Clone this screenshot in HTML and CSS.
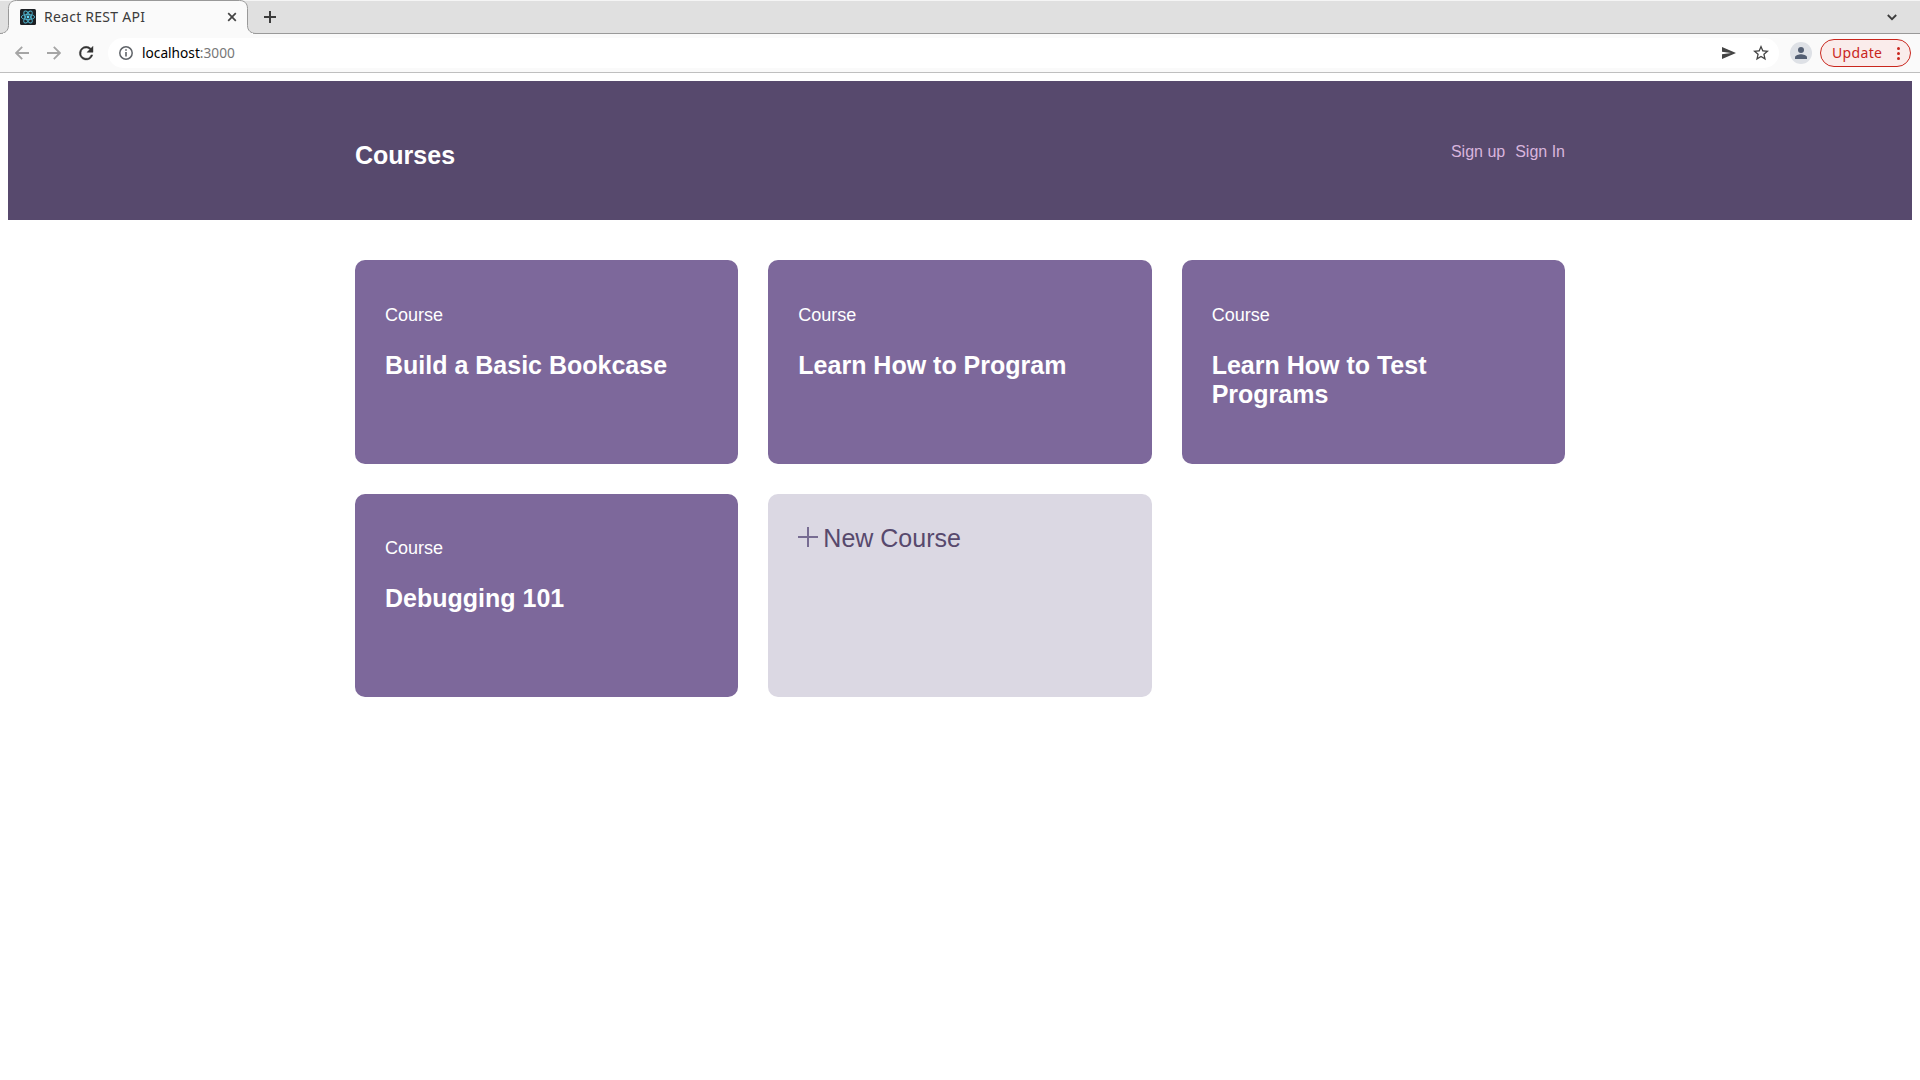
FILE: index.html
```html
<!DOCTYPE html>
<html lang="en">
<head>
<meta charset="utf-8">
<title>React REST API</title>
<link rel="stylesheet" href="styles.css">
</head>
<body>
<div class="tabstrip">
  <div class="tab">
    <svg class="tab-shape" width="256" height="34" viewBox="0 0 256 34"><path d="M0 33.5C5 33.5 8.500 30.500 8.500 25.500V8.500C8.500 3.500 11.500.5 16.500.5H239.500C244.500.5 247.500 3.500 247.500 8.500V25.500C247.500 30.500 251 33.500 256 33.500V34H0Z" fill="#fafafa" stroke="#999"/><path d="M3 33.500H253" stroke="#fafafa" stroke-width="1"/></svg>
    <svg class="favicon" width="16" height="16" viewBox="0 0 16 16"><rect width="16" height="16" rx="1.500" fill="#1d2024"/><g fill="none" stroke="#4fb3cd" stroke-width=".9"><ellipse cx="8" cy="8" rx="6.700" ry="2.600"/><ellipse cx="8" cy="8" rx="6.700" ry="2.600" transform="rotate(60 8 8)"/><ellipse cx="8" cy="8" rx="6.700" ry="2.600" transform="rotate(120 8 8)"/></g><circle cx="8" cy="8" r="1.400" fill="#61dafb"/></svg>
    <span class="tab-title">React REST API</span>
    <svg class="tab-close" width="10" height="10" viewBox="0 0 10 10"><path d="M1.200 1.200L8.800 8.800M8.800 1.200L1.200 8.800" stroke="#444" stroke-width="1.700"/></svg>
  </div>
  <svg class="new-tab" width="12" height="12" viewBox="0 0 12 12"><path d="M6 0V12M0 6H12" stroke="#3c3c3c" stroke-width="2"/></svg>
  <svg class="tab-search" width="10" height="7" viewBox="0 0 10 7"><path d="M.8 1L5 5.200L9.200 1" fill="none" stroke="#3c3c3c" stroke-width="1.800"/></svg>
</div>
<div class="toolbar">
  <svg class="nav back" width="14" height="14" viewBox="0 0 14 14"><path d="M14 7H1.500M7.200.9L1.100 7L7.200 13.100" fill="none" stroke="#a5a5a5" stroke-width="1.800"/></svg>
  <svg class="nav forward" width="14" height="14" viewBox="0 0 14 14"><path d="M0 7H12.500M6.800.9L12.900 7L6.800 13.100" fill="none" stroke="#a5a5a5" stroke-width="1.800"/></svg>
  <svg class="nav" width="24" height="24" viewBox="1 1 22 22"><path d="M17.650 6.350A7.960 7.960 0 0 0 12 4a8 8 0 1 0 7.730 10h-2.080A6 6 0 1 1 12 6c1.660 0 3.140.69 4.220 1.780L13 11h7V4z" fill="#333" transform="translate(2.800 2.800) scale(.78)" stroke="#333" stroke-width=".5"/></svg>
  <div class="omnibox">
    <svg width="14" height="14" viewBox="0 0 14 14"><circle cx="7" cy="7" r="6.200" fill="none" stroke="#5f6368" stroke-width="1.500"/><path d="M7 6V10.500M7 3.300V4.800" stroke="#5f6368" stroke-width="1.600"/></svg>
    <span class="url">localhost<span class="port">:3000</span></span>
    <svg class="send" width="14" height="12" viewBox="0 0 14 12"><path d="M0 0L14 6L0 12V7.300L9 6L0 4.700Z" fill="#444"/></svg>
    <svg class="star" width="20" height="20" viewBox="2 2 20 20"><path transform="translate(2.400 2.400) scale(.8)" d="M22 9.240l-7.190-.62L12 2 9.190 8.630 2 9.240l5.460 4.730L5.820 21 12 17.270 18.180 21l-1.630-7.030zM12 15.400l-3.760 2.270 1-4.280-3.320-2.880 4.380-.38L12 6.100l1.710 4.040 4.380.38-3.320 2.880 1 4.280z" fill="#444"/></svg>
  </div>
  <svg class="avatar" width="22" height="22" viewBox="0 0 22 22"><circle cx="11" cy="11" r="11" fill="#dee1e6"/><circle cx="11" cy="8" r="3" fill="#535e72"/><path d="M5 17V15.300C5 13.300 9 12.300 11 12.300S17 13.300 17 15.300V17Z" fill="#535e72"/></svg>
  <div class="update"><span class="update-text">Update</span><svg width="3" height="13" viewBox="0 0 3 13" fill="#c9261d"><circle cx="1.500" cy="1.500" r="1.500"/><circle cx="1.500" cy="6.500" r="1.500"/><circle cx="1.500" cy="11.500" r="1.500"/></svg></div>
</div>
<div class="page">
  <header class="header">
    <div class="wrap header-row">
      <h1 class="logo">Courses</h1>
      <nav class="links"><a>Sign up</a><a>Sign In</a></nav>
    </div>
  </header>
  <main class="wrap courses">
    <a class="card"><h2 class="label">Course</h2><h3 class="title">Build a Basic Bookcase</h3></a>
    <a class="card"><h2 class="label">Course</h2><h3 class="title">Learn How to Program</h3></a>
    <a class="card"><h2 class="label">Course</h2><h3 class="title">Learn How to Test Programs</h3></a>
    <a class="card"><h2 class="label">Course</h2><h3 class="title">Debugging 101</h3></a>
    <a class="card card-new"><svg class="plus" width="20" height="20" viewBox="0 0 20 20"><path d="M10 0V20M0 10H20" stroke="#776c92" stroke-width="2"/></svg><span>New Course</span></a>
  </main>
</div>
</body>
</html>
```
FILE: styles.css
```css
* { box-sizing: border-box; }
body { margin: 0; background: #fff; font-family: "Liberation Sans", Arial, sans-serif; overflow: hidden; }
svg { display: block; flex: none; }

.tabstrip { display: flex; align-items: center; height: 34px; background: #e0e0e0; border-top: 1px solid #f5f5f5; border-bottom: 1px solid #999; }
.tab { position: relative; display: flex; align-items: center; width: 256px; height: 34px; margin: -1px 0; padding: 0 19px 0 20px; }
.tab-shape { position: absolute; left: 0; top: 0; }
.favicon, .tab-title, .tab-close { position: relative; }
.tab-title { margin: 0 auto 0 8px; padding-bottom: 2px; font: 14px "Noto Sans", sans-serif; letter-spacing: .25px; color: #3c3c3c; white-space: nowrap; }
.new-tab { margin-left: 8px; }
.tab-search { margin: 0 23px 0 auto; }

.toolbar { display: flex; align-items: center; height: 39px; padding-left: 15px; background: #fafafa; border-bottom: 1px solid #bfbfbf; }
.forward { margin: 0 13px 0 18px; }
.omnibox { display: flex; align-items: center; flex: 1; height: 30px; margin-left: 10px; padding: 0 8px 0 11px; background: #fff; border-radius: 15px; }
.url { margin: 0 auto 0 9px; padding-bottom: 2px; font: 13.700px "Noto Sans", sans-serif; color: #000; white-space: nowrap; }
.port { color: #777; }
.send { margin-right: 15px; }
.avatar { margin: 0 8px 0 11px; }
.update { display: flex; align-items: center; justify-content: space-between; width: 91px; height: 28px; margin-right: 9px; padding: 0 10px 0 11px; background: #faeceb; border: 1px solid #c9261d; border-radius: 14px; }
.update-text { padding-bottom: 2px; font: 14px "Noto Sans", sans-serif; letter-spacing: .35px; color: #c9261d; }

.page { padding: 8px; }
.wrap { width: 1210px; margin: 0 auto; }
.header { height: 139px; padding-top: 60px; background: #57496d; }
.header-row { display: flex; justify-content: space-between; align-items: flex-start; }
.logo { margin: 0; font-size: 25px; line-height: 29px; color: #fff; }
.links { display: flex; gap: 10px; font-size: 16px; line-height: 18px; margin-top: 2px; color: #d9b5dd; }
.courses { display: grid; grid-template-columns: repeat(3, 1fr); grid-auto-rows: 203.400px; gap: 30px; padding-top: 40.200px; }
.card { padding: 44.400px 30px 30px; border-radius: 10px; background: #7d689b; color: #fff; }
.label { margin: 0 0 26.400px; font-size: 18px; font-weight: 400; line-height: 20px; }
.title { margin: 0; font-size: 25px; line-height: 29px; }
.card-new { display: flex; align-items: flex-start; gap: 5px; padding-top: 30px; background: #dbd8e3; color: #57496d; font-size: 25px; line-height: 29px; }
.plus { margin-top: 3.400px; }
```
